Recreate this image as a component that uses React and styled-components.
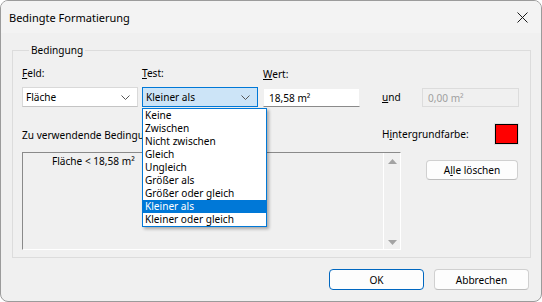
import React from 'react';
import styled, {createGlobalStyle} from 'styled-components';

const GlobalStyle = createGlobalStyle`
  html, body {
    margin: 0;
    padding: 0;
    background: #ffffff;
  }
  body {
    font-family: "Noto Sans", "Liberation Sans", sans-serif;
    font-size: 10.1px;
    color: #000000;
  }
  * {
    box-sizing: border-box;
  }
`;

const Window = styled.div`
  width: 542px;
  height: 302px;
  border: 1px solid #9b9b9b;
  border-radius: 8px;
  background: #f0f0f0;
  overflow: hidden;
  display: flex;
  flex-direction: column;
`;

const TitleBar = styled.div`
  height: 32px;
  flex: none;
  display: flex;
  align-items: center;
  justify-content: space-between;
  padding: 0 9px 0 8px;
  background: #f3f3f3;
  font-size: 11px;
`;

const CloseBtn = styled.div`
  width: 20px;
  height: 20px;
  display: flex;
  align-items: center;
  justify-content: center;
`;

const Body = styled.div`
  flex: 1;
  padding: 10px 12px 0 11px;
  display: flex;
  flex-direction: column;
`;

const Group = styled.fieldset`
  margin: 0;
  padding: 9px 11px 7px 9px;
  border: 1px solid #dcdcdc;
  border-radius: 0;
  min-width: 0;
  width: 519px;
`;

const Legend = styled.legend`
  margin-left: 7px;
  padding: 0 2px;
  line-height: 14px;
`;

const FieldRow = styled.div`
  display: flex;
  align-items: flex-end;
`;

const FieldCol = styled.div`
  display: flex;
  flex-direction: column;
  width: ${p => p.$w}px;
  margin-right: ${p => p.$mr || 0}px;
  position: relative;
`;

const Label = styled.div`
  line-height: 15px;
  margin-bottom: 6px;
  white-space: nowrap;
`;

const Combo = styled.div`
  height: 20px;
  display: flex;
  align-items: center;
  justify-content: space-between;
  padding: 0 7px 0 3px;
  background: ${p => p.$focus ? '#cce4f7' : '#ffffff'};
  border: 1px solid ${p => p.$focus ? '#0078d7' : '#d9d9d9'};
  border-bottom-color: ${p => p.$focus ? '#0078d7' : '#c4c4c4'};
`;

const Input = styled.div`
  height: 19px;
  display: flex;
  align-items: center;
  padding: 0 5px;
  background: ${p => p.$disabled ? '#f0f0f0' : '#ffffff'};
  color: ${p => p.$disabled ? '#a0a0a0' : '#000000'};
  border: 1px solid ${p => p.$disabled ? '#dcdcdc' : '#f0f0f0'};
  border-bottom-color: ${p => p.$disabled ? '#dcdcdc' : '#8a8a8a'};
`;

const Und = styled.div`
  width: 40px;
  height: 20px;
  line-height: 20px;
`;

const DropList = styled.div`
  position: absolute;
  top: calc(100% + 1px);
  left: 0;
  width: 125px;
  background: #ffffff;
  border: 1px solid #0078d7;
  box-shadow: 2px 2px 3px rgba(0, 0, 0, 0.3);
  z-index: 5;
`;

const DropItem = styled.div`
  height: 13px;
  line-height: 13px;
  padding-left: 2px;
  white-space: nowrap;
  background: ${p => p.$selected ? '#0078d7' : 'transparent'};
  color: ${p => p.$selected ? '#ffffff' : '#000000'};
`;

const MidRow = styled.div`
  display: flex;
  align-items: center;
  height: 22px;
  margin-top: 16px;
`;

const MidLabel = styled.div`
  flex: 1;
  line-height: 15px;
  margin-top: 2px;
  white-space: nowrap;
`;

const ColorPick = styled.div`
  display: flex;
  align-items: center;
  justify-content: space-between;
  width: 137px;
`;

const Swatch = styled.div`
  width: 25px;
  height: 22px;
  border: 1px solid #e0e0e0;
  display: flex;
`;

const SwatchFill = styled.div`
  flex: 1;
  background: #ff0000;
  border: 1px solid #000000;
`;

const ListRow = styled.div`
  display: flex;
  align-items: flex-start;
  margin-top: 7px;
`;

const ListBox = styled.div`
  width: 379px;
  height: 98px;
  display: flex;
  border-top: 1px solid #8a8a8a;
  border-left: 1px solid #8a8a8a;
  border-right: 1px solid #ffffff;
  border-bottom: 1px solid #ffffff;
`;

const ListContent = styled.div`
  flex: 1;
  padding: 1px 0 0 29px;
  line-height: 15px;
`;

const ScrollBar = styled.div`
  width: 17px;
  border-left: 1px solid #ffffff;
  display: flex;
  flex-direction: column;
  justify-content: space-between;
  align-items: center;
  padding: 6px 0 4px;
`;

const Button = styled.div`
  width: ${p => p.$w || 95}px;
  height: ${p => p.$h || 21}px;
  display: flex;
  align-items: center;
  justify-content: center;
  background: #fdfdfd;
  border: 1px solid ${p => p.$primary ? '#0067c0' : '#d0d0d0'};
  border-bottom-color: ${p => p.$primary ? '#0067c0' : '#bdbdbd'};
  border-radius: 4px;
`;

const SideButton = styled(Button)`
  margin: 8px 0 0 25px;
`;

const Footer = styled.div`
  display: flex;
  justify-content: flex-end;
  gap: 10px;
  padding: 11px 0 0 0;
`;

const Chevron = () => (
  <svg width="9" height="5" viewBox="0 0 9 5">
    <polyline points="0.5,0.5 4.5,4.5 8.5,0.5" fill="none" stroke="#555" strokeWidth="1"/>
  </svg>
);

const Arrow = ({up}) => (
  <svg width="9" height="5" viewBox="0 0 9 5">
    <polygon points={up ? '0,5 4.5,0 9,5' : '0,0 4.5,5 9,0'} fill="#a3a3a3"/>
  </svg>
);

const TESTS = [
  'Keine', 'Zwischen', 'Nicht zwischen', 'Gleich', 'Ungleich',
  'Größer als', 'Größer oder gleich', 'Kleiner als', 'Kleiner oder gleich'
];

export default function App() {
  return (
    <>
      <GlobalStyle/>
      <Window>
        <TitleBar>
          <span>Bedingte Formatierung</span>
          <CloseBtn>
            <svg width="11" height="11" viewBox="0 0 11 11">
              <path d="M0.5 0.5 L10.5 10.5 M10.5 0.5 L0.5 10.5" stroke="#1a1a1a" strokeWidth="1"/>
            </svg>
          </CloseBtn>
        </TitleBar>
        <Body>
          <Group>
            <Legend>Bedingung</Legend>
            <FieldRow>
              <FieldCol $w={116} $mr={4}>
                <Label><u>F</u>eld:</Label>
                <Combo>Fläche<Chevron/></Combo>
              </FieldCol>
              <FieldCol $w={116} $mr={5}>
                <Label><u>T</u>est:</Label>
                <Combo $focus>Kleiner als<Chevron/></Combo>
                <DropList>
                  {TESTS.map(t => (
                    <DropItem key={t} $selected={t === 'Kleiner als'}>{t}</DropItem>
                  ))}
                </DropList>
              </FieldCol>
              <FieldCol $w={97} $mr={22}>
                <Label><u>W</u>ert:</Label>
                <Input>18,58 m²</Input>
              </FieldCol>
              <Und><u>u</u>nd</Und>
              <FieldCol $w={97}>
                <Input $disabled>0,00 m²</Input>
              </FieldCol>
            </FieldRow>
            <MidRow>
              <MidLabel>Zu verwendende Bedingungen:</MidLabel>
              <ColorPick>
                <span>H<u>i</u>ntergrundfarbe:</span>
                <Swatch><SwatchFill/></Swatch>
              </ColorPick>
            </MidRow>
            <ListRow>
              <ListBox>
                <ListContent>Fläche &lt; 18,58 m²</ListContent>
                <ScrollBar>
                  <Arrow up/>
                  <Arrow/>
                </ScrollBar>
              </ListBox>
              <SideButton $w={92} $h={20}>A<u>l</u>le löschen</SideButton>
            </ListRow>
          </Group>
          <Footer>
            <Button $primary>OK</Button>
            <Button>Abbrechen</Button>
          </Footer>
        </Body>
      </Window>
    </>
  );
}
